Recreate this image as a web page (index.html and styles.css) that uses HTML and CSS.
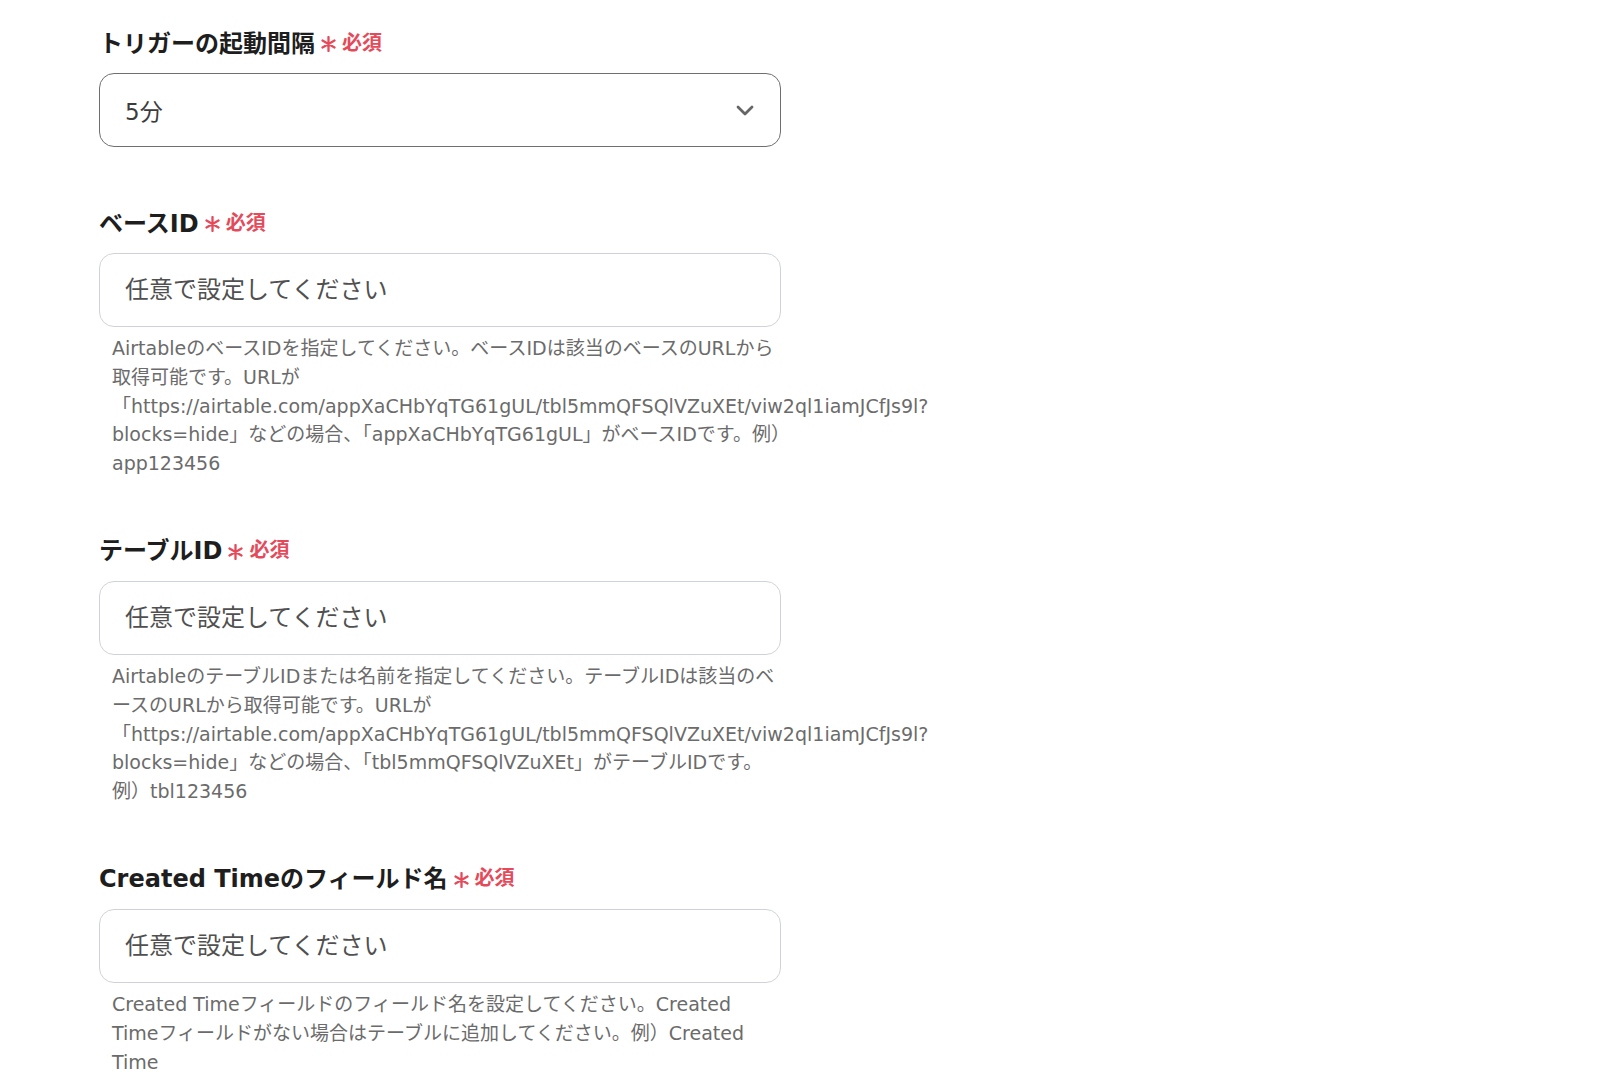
FILE: index.html
```html
<!DOCTYPE html>
<html lang="ja">
<head>
    <meta charset="UTF-8">
    <meta name="viewport" content="width=device-width, initial-scale=1.0">
    <title>Airtable トリガー設定</title>
    <link rel="stylesheet" href="styles.css">
</head>
<body>

    <form class="settings-form">

        <!-- Trigger interval -->
        <div class="field field-select">
            <label class="field-label">トリガーの起動間隔
                <span class="required">
                    <svg class="star" width="15" height="16" viewBox="0 0 15 16">
                        <path d="M7.5 1v14M1.5 4.5l12 7M1.5 11.5l12-7" stroke="#e54a5b" stroke-width="2.3" stroke-linecap="round"/>
                    </svg>必須
                </span>
            </label>
            <div class="select-box">
                <span class="select-value">5分</span>
                <svg class="chevron" width="18" height="11" viewBox="0 0 18 11">
                    <polyline points="2,2 9,9 16,2" fill="none" stroke="#666" stroke-width="2.8" stroke-linecap="round" stroke-linejoin="round"/>
                </svg>
            </div>
        </div>

        <!-- Base ID -->
        <div class="field">
            <label class="field-label">ベースID
                <span class="required">
                    <svg class="star" width="15" height="16" viewBox="0 0 15 16">
                        <path d="M7.5 1v14M1.5 4.5l12 7M1.5 11.5l12-7" stroke="#e54a5b" stroke-width="2.3" stroke-linecap="round"/>
                    </svg>必須
                </span>
            </label>
            <input class="text-input" type="text" placeholder="任意で設定してください">
            <p class="help-text">AirtableのベースIDを指定してください。ベースIDは該当のベースのURLから取得可能です。URLが「https://airtable.com/appXaCHbYqTG61gUL/tbl5mmQFSQlVZuXEt/viw2ql1iamJCfJs9l?<wbr>blocks=hide」などの場合、「appXaCHbYqTG61gUL」がベースIDです。例）app123456</p>
        </div>

        <!-- Table ID -->
        <div class="field">
            <label class="field-label">テーブルID
                <span class="required">
                    <svg class="star" width="15" height="16" viewBox="0 0 15 16">
                        <path d="M7.5 1v14M1.5 4.5l12 7M1.5 11.5l12-7" stroke="#e54a5b" stroke-width="2.3" stroke-linecap="round"/>
                    </svg>必須
                </span>
            </label>
            <input class="text-input" type="text" placeholder="任意で設定してください">
            <p class="help-text">AirtableのテーブルIDまたは名前を指定してください。テーブルIDは該当のベースのURLから取得可能です。URLが「https://airtable.com/appXaCHbYqTG61gUL/tbl5mmQFSQlVZuXEt/viw2ql1iamJCfJs9l?<wbr>blocks=hide」などの場合、「tbl5mmQFSQlVZuXEt」がテーブルIDです。例）tbl123456</p>
        </div>

        <!-- Created Time field -->
        <div class="field">
            <label class="field-label">Created Timeのフィールド名
                <span class="required">
                    <svg class="star" width="15" height="16" viewBox="0 0 15 16">
                        <path d="M7.5 1v14M1.5 4.5l12 7M1.5 11.5l12-7" stroke="#e54a5b" stroke-width="2.3" stroke-linecap="round"/>
                    </svg>必須
                </span>
            </label>
            <input class="text-input" type="text" placeholder="任意で設定してください">
            <p class="help-text">Created Timeフィールドのフィールド名を設定してください。Created Timeフィールドがない場合はテーブルに追加してください。例）Created Time</p>
        </div>

    </form>

</body>
</html>
```

FILE: styles.css
```css
* {
    padding: 0;
    margin: 0;
    box-sizing: border-box;
}

body {
    background: #ffffff;
    font-family: 'DejaVu Sans', 'Noto Sans CJK JP', sans-serif;
    color: #222;
}

.settings-form {
    width: 781px;
    padding: 25px 0 0 99px;
}

.field {
    margin-bottom: 55px;
}

.field-select {
    margin-bottom: 58px;
}

.field-label {
    display: flex;
    align-items: center;
    height: 32px;
    margin-bottom: 16px;
    font-size: 24px;
    font-weight: bold;
    color: #1e1e1e;
    white-space: nowrap;
}

.required {
    display: inline-flex;
    align-items: center;
    margin-left: 6px;
    color: #e54a5b;
    font-size: 20px;
    font-weight: bold;
}

.star {
    display: block;
    margin: 6px 6px 0 0;
}

.select-box {
    display: flex;
    align-items: center;
    justify-content: space-between;
    height: 74px;
    padding: 0 26px 0 25px;
    border: 1.5px solid #6f6f6f;
    border-radius: 15px;
    background: #fff;
}

.select-value {
    font-size: 23px;
    color: #3c3c3c;
}

.chevron {
    display: block;
}

.text-input {
    display: block;
    width: 100%;
    height: 74px;
    padding: 0 25px;
    border: 1.5px solid #cfd3d9;
    border-radius: 15px;
    font-family: inherit;
    font-size: 24px;
    color: #333;
    outline: none;
    background: #fff;
}

.text-input::placeholder {
    color: #505050;
}

.help-text {
    margin-top: 7px;
    padding-left: 13px;
    font-size: 19px;
    line-height: 28.8px;
    color: #6b6b6b;
}
```
